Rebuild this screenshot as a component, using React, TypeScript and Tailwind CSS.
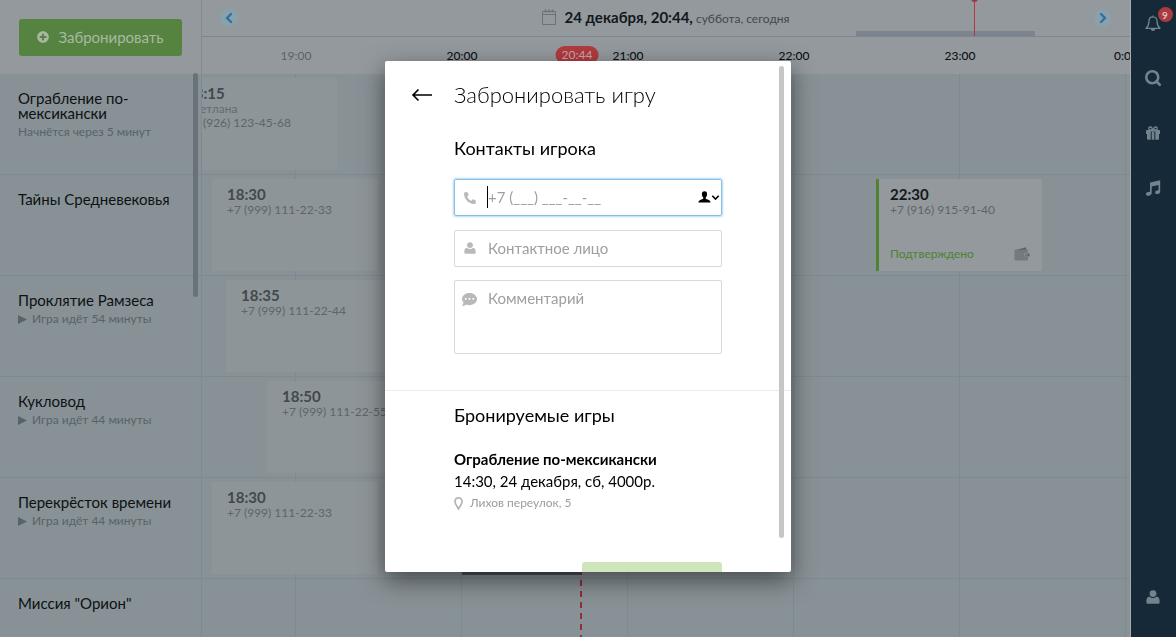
import type { ReactNode } from "react";
import { ChevronLeft, ChevronRight, Search } from "lucide-react";
import { FaPlusCircle, FaCommentDots, FaPhoneAlt } from "react-icons/fa";

const HOUR_WIDTH = 166;
const FIRST_HOUR = 19 * 60;
const FIRST_HOUR_OFFSET = 93;

function timeToX(minutes: number) {
  return Math.round(((minutes - FIRST_HOUR) * HOUR_WIDTH) / 60) + FIRST_HOUR_OFFSET;
}

type Booking = {
  start: number;
  time: string;
  person?: string;
  phone: string;
  confirmed?: boolean;
};

type Room = {
  name: string;
  note?: string;
  playing?: boolean;
  bookings: Booking[];
};

const rooms: Room[] = [
  {
    name: "Ограбление по-мексикански",
    note: "Начнётся через 5 минут",
    bookings: [{ start: 1095, time: "18:15", person: "Светлана", phone: "+7 (926) 123-45-68" }],
  },
  {
    name: "Тайны Средневековья",
    bookings: [
      { start: 1110, time: "18:30", phone: "+7 (999) 111-22-33" },
      { start: 1350, time: "22:30", phone: "+7 (916) 915-91-40", confirmed: true },
    ],
  },
  {
    name: "Проклятие Рамзеса",
    note: "Игра идёт 54 минуты",
    playing: true,
    bookings: [{ start: 1115, time: "18:35", phone: "+7 (999) 111-22-44" }],
  },
  {
    name: "Кукловод",
    note: "Игра идёт 44 минуты",
    playing: true,
    bookings: [{ start: 1130, time: "18:50", phone: "+7 (999) 111-22-55" }],
  },
  {
    name: "Перекрёсток времени",
    note: "Игра идёт 44 минуты",
    playing: true,
    bookings: [{ start: 1110, time: "18:30", phone: "+7 (999) 111-22-33" }],
  },
  { name: 'Миссия "Орион"', bookings: [] },
];

const hours = ["19:00", "20:00", "21:00", "22:00", "23:00", "0:00"];

function PersonIcon({ className }: { className?: string }) {
  return (
    <svg viewBox="0 0 14 14" className={className} fill="currentColor" aria-hidden="true">
      <circle cx="7" cy="3.6" r="3.4" />
      <path d="M3.4 6.600C1.300 7.100.4 8.600.4 11v1.400c0 .8.6 1.400 1.400 1.400h10.400c.8 0 1.400-.6 1.400-1.400V11c0-2.400-.9-3.900-3-4.400A4.700 4.700 0 0 1 7 8.100a4.700 4.700 0 0 1-3.600-1.500z" />
    </svg>
  );
}

function BellIcon() {
  return (
    <svg viewBox="0 0 16 17" className="h-[17px] w-4" fill="none" stroke="currentColor" strokeWidth="1.3" strokeLinejoin="round" aria-hidden="true">
      <path d="M8 1.8c-2.600 0-4.100 2-4.100 4.600 0 3.600-.9 5.300-2.900 6.900h14c-2-1.600-2.900-3.300-2.900-6.900 0-2.600-1.500-4.600-4.100-4.600z" />
      <path d="M8 .4v1.400" />
      <path d="M6.200 13.600a1.800 1.800 0 0 0 3.600 0z" fill="currentColor" />
    </svg>
  );
}

function GiftIcon() {
  return (
    <svg viewBox="0 0 14 14" className="size-[14px]" fill="currentColor" aria-hidden="true">
      <path d="M0 4.800c0-.4.3-.7.7-.7h12.600c.4 0 .7.3.7.7v3.100h-1v4.900c0 .6-.4.9-.9.9H9.300V5.600H4.700v8.100H1.900c-.5 0-.9-.3-.9-.9V7.900H0z" />
      <path d="M5.700 5.600h2.600v8.100H5.700z" />
      <path d="M6.600 3.900C6.300 2.200 5.500 1 4.200 1 2.200 1 2.200 3.900 4.300 3.900zM7.400 3.900C7.700 2.200 8.500 1 9.800 1c2 0 2 2.900-.1 2.900z" fill="none" stroke="currentColor" strokeWidth="1.3" />
    </svg>
  );
}

function MusicIcon() {
  return (
    <svg viewBox="0 0 16 16" className="size-4" fill="currentColor" aria-hidden="true">
      <path d="M5 2.600 15.200.3v11.200c0 1.600-1.400 2.600-2.900 2.600-1.300 0-2.200-.6-2.200-1.700 0-1.300 1.400-2.200 3.400-2.100V4.900L6.700 6.400v6.700c0 1.600-1.500 2.700-3.300 2.700-1.500 0-2.500-.7-2.500-1.800 0-1.400 1.700-2.400 4.100-2.200z" />
    </svg>
  );
}

function WalletIcon() {
  return (
    <svg viewBox="0 0 16 14" className="h-[14px] w-4" aria-hidden="true">
      <path d="M1 3.200 11 .4c.6-.2 1 .1 1.100.6l.4 2.200z" fill="#5a656a" />
      <path d="M.5 3.400c0-.4.4-.7.8-.7h11.900c.5 0 .8.4.8.8v1.900h-1.600a2.300 2.300 0 0 0 0 4.600H14v2.600c0 .5-.3.8-.8.8H1.300c-.4 0-.8-.3-.8-.8z" fill="#717b80" />
      <rect x="11" y="6.200" width="4.800" height="3.200" rx="1.500" fill="#5d686d" />
      <circle cx="12.700" cy="7.800" r=".8" fill="#93999d" />
    </svg>
  );
}

function CalendarIcon() {
  return (
    <svg viewBox="0 0 14 16" className="h-4 w-[14px]" fill="none" stroke="currentColor" aria-hidden="true">
      <path d="M.5 2.500h13v13H.5zM.5 5.500h13" />
      <path d="M3.500.5v3M7 .5v3M10.500.5v3" strokeWidth="1.500" />
    </svg>
  );
}

function BookingCard({ booking, left }: { booking: Booking; left: number }) {
  return (
    <article
      style={{ marginLeft: left }}
      className={
        booking.confirmed
          ? "flex h-[92px] w-[166px] shrink-0 flex-col border-l-[3px] border-[#4d8333] bg-[#93999d] pt-[7px] pr-3 pl-[11px]"
          : "flex h-[92px] w-[166px] shrink-0 flex-col bg-[#8e9598] pt-[7px] pl-[15px]"
      }
    >
      <h3
        className={
          booking.confirmed
            ? "text-[15px] leading-[17px] font-bold text-[#12181b]"
            : "text-[15px] leading-[17px] font-bold text-[#40494e]"
        }
      >
        {booking.time}
      </h3>
      {booking.person && <p className="text-xs leading-[14px] text-[#626b70]">{booking.person}</p>}
      <p className="text-xs leading-[14px] whitespace-nowrap text-[#5c656a]">{booking.phone}</p>
      {booking.confirmed && (
        <div className="mt-auto flex items-center justify-between pb-[9px] text-xs leading-4 text-[#4d8333]">
          Подтверждено
          <WalletIcon />
        </div>
      )}
    </article>
  );
}

function RailButton({ label, children }: { label: string; children: ReactNode }) {
  return (
    <button type="button" aria-label={label} className="relative flex size-6 items-center justify-center">
      {children}
    </button>
  );
}

function Schedule() {
  return (
    <div className="flex h-screen overflow-hidden bg-[#889195]">
      <aside className="relative flex w-[202px] shrink-0 flex-col border-r border-[#7f8990]">
        <div className="flex h-[74px] shrink-0 items-center bg-[#93999d] px-[19px]">
          <button type="button" className="flex h-[37px] w-full items-center justify-center gap-[9px] rounded-[3px] bg-[#568440] text-[15px] text-[#a9b8a4]">
            <FaPlusCircle className="size-3" />
            Забронировать
          </button>
        </div>
        {rooms.map((room) => (
          <section key={room.name} className="h-[101px] shrink-0 border-b border-[#7f8990] px-[18px] pt-[17px]">
            <h2 className="text-[15px] leading-[15px] text-[#0c1114]">{room.name}</h2>
            {room.note && (
              <p className="mt-[3px] flex items-center gap-[5px] text-xs leading-4 whitespace-nowrap text-[#576369]">
                {room.playing && (
                  <svg viewBox="0 0 9 9" className="size-[9px]" fill="currentColor" aria-hidden="true">
                    <path d="M0 0 9 4.500 0 9z" />
                  </svg>
                )}
                {room.note}
              </p>
            )}
          </section>
        ))}
        <div className="absolute top-[73px] right-[3px] h-[224px] w-[5px] rounded-full bg-[#687278]" />
      </aside>

      <main className="flex min-w-0 flex-1 flex-col overflow-hidden">
        <header className="relative flex h-[37px] shrink-0 items-center justify-between border-b border-[#7f878c] bg-[#93999d] px-[18px] pb-px">
          <button type="button" aria-label="Назад" className="flex size-[18px] items-center justify-center rounded-full bg-[#8aa0ab] text-[#2c6fa3]">
            <ChevronLeft className="size-4" strokeWidth={3.5} />
          </button>
          <div className="flex items-center text-[#12181b]">
            <span className="mr-2 text-[#697277]">
              <CalendarIcon />
            </span>
            <p className="text-xs whitespace-nowrap text-[#40494e]">
              <strong className="text-[15px] text-[#12181b]">24 декабря, 20:44,</strong> суббота, сегодня
            </p>
          </div>
          <button type="button" aria-label="Вперёд" className="flex size-[18px] items-center justify-center rounded-full bg-[#8aa0ab] text-[#2c6fa3]">
            <ChevronRight className="size-4" strokeWidth={3.5} />
          </button>
          <div className="absolute right-[95px] bottom-0 flex h-[5px] w-[179px] bg-[#7c848f]" />
          <div className="absolute top-0 right-[155px] h-9 w-px bg-[#b03a3f]">
            <div className="absolute -top-[5px] -left-[3px] size-[7px] rounded-full bg-[#a3343b]" />
          </div>
        </header>

        <div className="relative flex h-[37px] shrink-0 items-center bg-[#93999d] pl-[11px]">
          {hours.map((hour, i) => (
            <span
              key={hour}
              className={
                i === 0
                  ? "w-[166px] shrink-0 text-center text-xs text-[#5b6469]"
                  : "w-[166px] shrink-0 text-center text-xs font-medium text-[#0c1114]"
              }
            >
              {hour}
            </span>
          ))}
          <span
            style={{ left: timeToX(1242) }}
            className="absolute top-[9px] -translate-x-1/2 rounded-full bg-[#b03b3f] px-[6px] text-xs leading-[18px] text-[#c9a9ab]"
          >
            20:44
          </span>
        </div>

        <div className="relative flex-1">
          <div className="absolute inset-0 flex">
            <div className="w-[94px] shrink-0 border-r border-[#7f8990]" />
            {hours.map((hour) => (
              <div key={hour} className="w-[166px] shrink-0 border-r border-[#7f8990]" />
            ))}
          </div>
          {rooms.map((room) => (
            <div key={room.name} className="relative flex h-[101px] items-start border-b border-[#7f8990] pt-1">
              {room.bookings.map((booking, i) => (
                <BookingCard
                  key={booking.time}
                  booking={booking}
                  left={timeToX(booking.start) - (i > 0 ? timeToX(room.bookings[i - 1].start) + HOUR_WIDTH : 0)}
                />
              ))}
            </div>
          ))}
          <div className="absolute top-[498px] left-[260px] h-[3px] w-[118px] bg-[#4b5357]" />
          <div
            style={{ left: timeToX(1243) }}
            className="absolute inset-y-0 w-[2px] bg-[repeating-linear-gradient(to_bottom,#8f2f3a_0_6px,transparent_6px_11px)]"
          />
        </div>
      </main>

      <nav aria-label="Меню" className="flex w-[46px] shrink-0 flex-col items-center justify-between border-l border-[#a4acb0] bg-[#152938] pt-[11px] pr-[2px] pb-7 text-[#72838e]">
        <div className="flex flex-col items-center gap-[31px]">
          <RailButton label="Уведомления">
            <BellIcon />
            <span className="absolute -top-1 -right-2 flex size-[15px] items-center justify-center rounded-full bg-[#ac3b3f] text-[10px] leading-none font-bold text-[#d6c4c6]">
              9
            </span>
          </RailButton>
          <RailButton label="Поиск">
            <Search className="size-[18px]" strokeWidth={3.5} />
          </RailButton>
          <RailButton label="Подарки">
            <GiftIcon />
          </RailButton>
          <RailButton label="Музыка">
            <MusicIcon />
          </RailButton>
        </div>
        <RailButton label="Профиль">
          <PersonIcon className="size-[14px]" />
        </RailButton>
      </nav>
    </div>
  );
}

function BookingDialog() {
  return (
    <div className="fixed inset-0 flex justify-center pt-[61px] pb-[65px]">
      <div
        role="dialog"
        aria-modal="true"
        aria-labelledby="dialog-title"
        className="relative w-[406px] overflow-hidden rounded-[2px] bg-white text-black shadow-[0_8px_24px_rgba(0,0,0,0.5)]"
      >
        <form>
          <div className="px-[69px] pt-[19px] pb-9">
            <div className="-ml-[43px] flex items-center gap-[21px]">
              <button type="button" aria-label="Назад" className="flex h-[30px] w-[22px] items-center">
                <svg viewBox="0 0 22 14" className="h-[14px] w-[22px]" fill="none" stroke="currentColor" strokeWidth="1.600" aria-hidden="true">
                  <path d="M21 7H2M7.500 1.500 2 7l5.500 5.500" />
                </svg>
              </button>
              <h1 id="dialog-title" className="text-[22px] leading-[30px] font-light whitespace-nowrap">
                Забронировать игру
              </h1>
            </div>

            <h2 className="mt-[26px] text-lg leading-6">Контакты игрока</h2>

            <div className="relative mt-[19px] text-[15px]">
              <FaPhoneAlt className="absolute top-[13px] left-[10px] size-3 text-[#b9b9b9]" />
              <span className="absolute top-[7px] left-[33px] h-[22px] w-px bg-black" />
              <input
                type="tel"
                aria-label="Телефон"
                placeholder="+7 (___) ___-__-__"
                className="block h-[37px] w-full rounded-[2px] border border-[#86bfe6] pr-9 pb-[2px] pl-[33px] shadow-[0_0_2px_1px_#b5daf3] outline-none placeholder:text-[#9f9f9f]"
              />
              <svg viewBox="0 0 22 12" className="absolute top-3 right-[2px] h-3 w-[22px]" aria-hidden="true">
                <path d="M6.500.2C4.700.2 3.800 1.500 3.900 3.200c.1 1.400.6 2.600 1.400 3.300.2.9-.2 1.400-1.200 1.800C2 9.100.5 9.500.4 11.600h12.200c-.1-2.100-1.600-2.500-3.700-3.300-1-.4-1.400-.9-1.200-1.800.8-.7 1.300-1.900 1.400-3.300C9.200 1.500 8.300.2 6.500.2z" />
                <path d="m14.300 4.800 3.200 3.200 3.200-3.200" fill="none" stroke="#000" strokeWidth="1.600" />
              </svg>
            </div>

            <div className="relative mt-[14px] text-[15px]">
              <PersonIcon className="absolute top-3 left-[10px] size-3 text-[#b9b9b9]" />
              <input
                type="text"
                aria-label="Контактное лицо"
                placeholder="Контактное лицо"
                className="block h-[37px] w-full rounded-[2px] border border-[#d9d9d9] pr-3 pb-[2px] pl-[33px] outline-none placeholder:text-[#9f9f9f]"
              />
            </div>

            <div className="relative mt-[13px] text-[15px]">
              <FaCommentDots className="absolute top-3 left-2 size-[15px] text-[#b9b9b9]" />
              <textarea
                aria-label="Комментарий"
                placeholder="Комментарий"
                className="block h-[74px] w-full resize-none rounded-[2px] border border-[#d9d9d9] py-[7px] pr-3 pl-[33px] leading-5 outline-none placeholder:text-[#9f9f9f]"
              />
            </div>
          </div>

          <div className="border-t border-[#ebebeb] px-[69px] pt-3">
            <h2 className="text-lg leading-6">Бронируемые игры</h2>
            <h3 className="mt-[21px] text-[15px] leading-[22px] font-bold">Ограбление по-мексикански</h3>
            <p className="text-[15px] leading-[22px]">14:30, 24 декабря, сб, 4000р.</p>
            <p className="flex items-center gap-[7px] text-xs leading-[22px] text-[#9c9c9c]">
              <svg viewBox="0 0 9 13" className="h-[13px] w-[9px]" fill="none" stroke="#b5b5b5" strokeWidth="1.700" aria-hidden="true">
                <path d="M4.500 12C3.500 9.600.9 7 .9 4.500a3.600 3.600 0 0 1 7.200 0C8.100 7 5.500 9.600 4.500 12z" />
              </svg>
              Лихов переулок, 5
            </p>
            <div className="mt-12 flex justify-end pb-8">
              <button type="submit" disabled aria-label="Сохранить" className="h-9 w-[140px] rounded-[3px] bg-[#cfe5bb]" />
            </div>
          </div>
        </form>
        <div className="absolute top-[5px] right-[7px] bottom-[34px] w-[5px] rounded-full bg-[#c4c6c7]" />
      </div>
    </div>
  );
}

export default function App() {
  return (
    <div className="font-['Lato',sans-serif]">
      <Schedule />
      <BookingDialog />
    </div>
  );
}
